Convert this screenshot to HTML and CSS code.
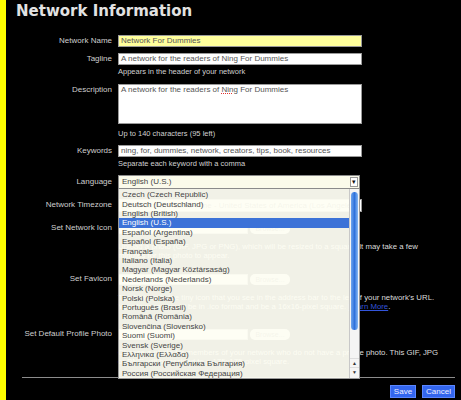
FILE: index.html
```html
<!DOCTYPE html>
<html>
<head>
<meta charset="utf-8">
<link rel="stylesheet" href="styles.css">
</head>
<body>
<div class="page">
  <h1 class="title">Network Information</h1>
  <div class="form">
    <div class="row r-name">
      <div class="lbl">Network Name</div>
      <div class="field"><div class="input hl">Network For Dummies</div></div>
    </div>
    <div class="row r-tag">
      <div class="lbl">Tagline</div>
      <div class="field"><div class="input">A network for the readers of Ning For Dummies</div><div class="hint">Appears in the header of your network</div></div>
    </div>
    <div class="row r-desc">
      <div class="lbl">Description</div>
      <div class="field"><div class="input area">A network for the readers of <span class="spell">Ning</span> For Dummies</div><div class="hint h-desc">Up to 140 characters (95 left)</div></div>
    </div>
    <div class="row r-key">
      <div class="lbl">Keywords</div>
      <div class="field"><div class="input">ning, for, dummies, network, creators, tips, book, resources</div><div class="hint">Separate each keyword with a comma</div></div>
    </div>
    <div class="row r-lang">
      <div class="lbl lbl-lang">Language</div>
      <div class="field"><div class="select">English (U.S.)<span class="arrow">▾</span></div></div>
    </div>
    <div class="row r-tz">
      <div class="lbl">Network Timezone</div>
      <div class="field"><div class="input tz">(GMT-08:00) Pacific Time - United States of America (Los Angeles)</div></div>
    </div>
    <div class="row r-icon">
      <div class="lbl">Set Network Icon</div>
      <div class="field">
        <div class="file"><div class="file-box"></div><div class="browse">Browse...</div></div>
        <div class="desc">Upload a photo (GIF, JPG or PNG), which will be resized to a square. It may take a few<br>minutes for this photo to appear.</div>
      </div>
    </div>
    <div class="row r-fav">
      <div class="lbl">Set Favicon</div>
      <div class="field">
        <div class="file"><div class="file-box"></div><div class="browse">Browse...</div></div>
        <div class="desc">The favicon is the tiny icon that you see in the address bar to the left of your network's URL.<br>Your favicon should be in .ico format and be a 16x16-pixel square. <a class="link" href="#">Learn More</a>.</div>
      </div>
    </div>
    <div class="row r-prof">
      <div class="lbl">Set Default Profile Photo</div>
      <div class="field">
        <div class="file"><div class="file-box"></div><div class="browse">Browse...</div></div>
        <div class="desc">Choose a photo for members of your network who do not have a profile photo. This GIF, JPG<br>or PNG will be resized to a 175x175-pixel square.</div>
      </div>
    </div>
  </div>
  <div class="rule"></div>
  <div class="actions"><div class="btn">Save</div><div class="btn">Cancel</div></div>

  <div class="dropdown">
    <div class="opts">
      <div class="opt">Czech (Czech Republic)</div>
      <div class="opt">Deutsch (Deutschland)</div>
      <div class="opt">English (British)</div>
      <div class="opt sel">English (U.S.)</div>
      <div class="opt">Español (Argentina)</div>
      <div class="opt">Español (España)</div>
      <div class="opt">Français</div>
      <div class="opt">Italiano (Italia)</div>
      <div class="opt">Magyar (Magyar Köztársaság)</div>
      <div class="opt">Nederlands (Nederlands)</div>
      <div class="opt">Norsk (Norge)</div>
      <div class="opt">Polski (Polska)</div>
      <div class="opt">Português (Brasil)</div>
      <div class="opt">Română (România)</div>
      <div class="opt">Slovenčina (Slovensko)</div>
      <div class="opt">Suomi (Suomi)</div>
      <div class="opt">Svensk (Sverige)</div>
      <div class="opt">Ελληνικα (Ελλαδα)</div>
      <div class="opt">Български (Република България)</div>
      <div class="opt">Россия (Российская Федерация)</div>
    </div>
    <div class="sbar">
      <div class="thumb"></div>
      <div class="sarrows"><div class="sa">▲</div><div class="sa">▼</div></div>
    </div>
  </div>
</div>
</body>
</html>
```
FILE: styles.css
```css
html, body {
  margin: 0;
  padding: 0;
  background: #000;
}
.page {
  position: relative;
  box-sizing: border-box;
  width: 461px;
  height: 400px;
  overflow: hidden;
  background: #000;
  border-left: 6px solid #ffff00;
  font-family: "Liberation Sans", Arial, sans-serif;
  color: #cfcfcf;
}
.title {
  margin: 0 0 15px 10px;
  padding-top: 2px;
  height: 18px;
  line-height: 18px;
  font-family: "DejaVu Sans", Verdana, sans-serif;
  font-weight: bold;
  font-size: 15px;
  color: #e2e2e2;
}
.row {
  display: grid;
  grid-template-columns: 106px 340px;
  column-gap: 6px;
  align-items: start;
}
.lbl {
  text-align: right;
  font-size: 8px;
  line-height: 12px;
  color: #cfcfcf;
  white-space: nowrap;
}
.input {
  box-sizing: border-box;
  width: 244px;
  height: 12px;
  border: 1px solid #9a9a9a;
  background: #fff;
  color: #555;
  font-size: 8px;
  line-height: 10px;
  padding: 0 2px;
  white-space: nowrap;
  overflow: hidden;
}
.input.hl { background: #ffff9c; }
.input.area { height: 40.5px; }
.input.tz { height: 13px; line-height: 11px; }
.spell { text-decoration: underline dotted #e03030; }
.hint {
  margin-top: 2px;
  font-size: 7.5px;
  line-height: 9px;
  color: #d0d0d0;
  white-space: nowrap;
}
.hint.h-desc { margin-top: 5px; }
.r-name { margin-bottom: 5.5px; }
.r-tag { margin-bottom: 8px; }
.r-desc { margin-bottom: 7px; }
.r-key { margin-bottom: 7px; }
.r-lang { margin-bottom: 10px; }
.r-tz { margin-bottom: 10px; }
.r-icon { margin-bottom: 12.5px; }
.r-fav { margin-bottom: 16.5px; }
.lbl-lang { line-height: 14px; }
.select {
  position: relative;
  box-sizing: border-box;
  width: 242px;
  height: 14px;
  border: 1px solid #8a8a8a;
  background: #fafaea;
  color: #444;
  font-size: 8px;
  line-height: 12px;
  padding: 0 3px;
}
.arrow {
  position: absolute;
  right: 1px;
  top: 1px;
  width: 8px;
  height: 10px;
  box-sizing: border-box;
  border: 1px solid #999;
  background: #fff;
  color: #111;
  font-size: 7px;
  line-height: 8px;
  text-align: center;
}
.file {
  display: flex;
  gap: 2px;
  margin-top: 1px;
  height: 11px;
}
.file-box {
  width: 130px;
  height: 11px;
  box-sizing: border-box;
  background: #fff;
  border: 1px solid #aaa;
}
.browse {
  width: 40px;
  height: 11px;
  border-radius: 5px;
  background: #e8e8e8;
  color: #444;
  font-size: 7px;
  line-height: 11px;
  text-align: center;
}
.desc {
  margin-top: 7.5px;
  font-size: 7.8px;
  line-height: 9.5px;
  color: #dcdcdc;
  white-space: nowrap;
}
.link { color: #3355dd; text-decoration: underline; }
.rule {
  margin: 10px 0 0 16px;
  width: 433px;
  height: 1px;
  background: #8c8c8c;
}
.actions {
  display: flex;
  justify-content: flex-end;
  gap: 6px;
  margin: 7px 6px 0 0;
}
.btn {
  height: 13px;
  box-sizing: border-box;
  padding: 0 3px;
  background: #3366ee;
  border: 1px solid #5a86ff;
  color: #eef;
  font-size: 8px;
  line-height: 11px;
}
.dropdown {
  position: absolute;
  left: 112px;
  top: 189px;
  width: 242px;
  height: 190px;
  box-sizing: border-box;
  display: flex;
  border: 1px solid #9a9a9a;
  border-top: none;
  background: rgba(254, 254, 243, 0.95);
}
.opts { flex: 1; padding-top: 1.3px; }
.opt {
  height: 9.4px;
  line-height: 9.4px;
  font-size: 8px;
  color: #444;
  padding-left: 3px;
  white-space: nowrap;
  overflow: hidden;
}
.opt.sel {
  background: rgba(52, 108, 214, 0.96);
  color: #fff;
}
.sbar {
  position: relative;
  width: 9px;
  border-left: 1px solid #c8c8c8;
  background: rgba(244, 244, 244, 0.95);
}
.thumb {
  position: absolute;
  left: 1px;
  top: 3px;
  width: 7px;
  height: 138px;
  border-radius: 4px;
  background: linear-gradient(to right, #6ea6ee, #2f72dc 50%, #88baf4);
}
.sarrows {
  position: absolute;
  left: 0;
  right: 0;
  bottom: 2px;
}
.sa {
  height: 8px;
  font-size: 5px;
  line-height: 8px;
  text-align: center;
  color: #333;
  border-top: 1px solid #ddd;
}
```
